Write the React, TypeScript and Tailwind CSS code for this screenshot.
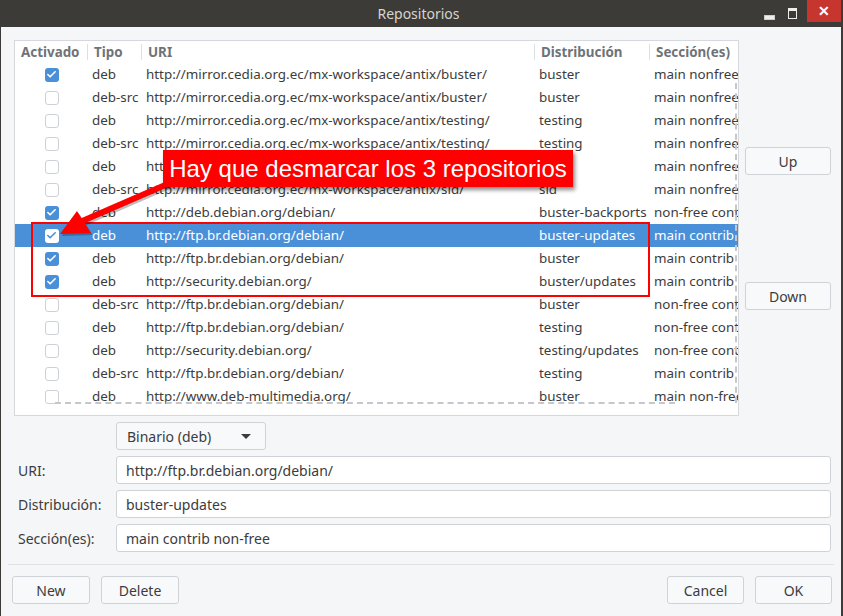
import { Check } from 'lucide-react';

type Repo = {
  on: boolean;
  tipo: string;
  uri: string;
  dist: string;
  sec: string;
  selected?: boolean;
};

const repos: Repo[] = [
  { on: true, tipo: 'deb', uri: 'http://mirror.cedia.org.ec/mx-workspace/antix/buster/', dist: 'buster', sec: 'main nonfree' },
  { on: false, tipo: 'deb-src', uri: 'http://mirror.cedia.org.ec/mx-workspace/antix/buster/', dist: 'buster', sec: 'main nonfree' },
  { on: false, tipo: 'deb', uri: 'http://mirror.cedia.org.ec/mx-workspace/antix/testing/', dist: 'testing', sec: 'main nonfree' },
  { on: false, tipo: 'deb-src', uri: 'http://mirror.cedia.org.ec/mx-workspace/antix/testing/', dist: 'testing', sec: 'main nonfree' },
  { on: false, tipo: 'deb', uri: 'http://mirror.cedia.org.ec/mx-workspace/antix/sid/', dist: 'sid', sec: 'main nonfree' },
  { on: false, tipo: 'deb-src', uri: 'http://mirror.cedia.org.ec/mx-workspace/antix/sid/', dist: 'sid', sec: 'main nonfree' },
  { on: true, tipo: 'deb', uri: 'http://deb.debian.org/debian/', dist: 'buster-backports', sec: 'non-free contrib' },
  { on: true, tipo: 'deb', uri: 'http://ftp.br.debian.org/debian/', dist: 'buster-updates', sec: 'main contrib non-free', selected: true },
  { on: true, tipo: 'deb', uri: 'http://ftp.br.debian.org/debian/', dist: 'buster', sec: 'main contrib non-free' },
  { on: true, tipo: 'deb', uri: 'http://security.debian.org/', dist: 'buster/updates', sec: 'main contrib non-free' },
  { on: false, tipo: 'deb-src', uri: 'http://ftp.br.debian.org/debian/', dist: 'buster', sec: 'non-free contrib' },
  { on: false, tipo: 'deb', uri: 'http://ftp.br.debian.org/debian/', dist: 'testing', sec: 'non-free contrib' },
  { on: false, tipo: 'deb', uri: 'http://security.debian.org/', dist: 'testing/updates', sec: 'non-free contrib' },
  { on: false, tipo: 'deb-src', uri: 'http://ftp.br.debian.org/debian/', dist: 'testing', sec: 'main contrib non-free' },
  { on: false, tipo: 'deb', uri: 'http://www.deb-multimedia.org/', dist: 'buster', sec: 'main non-free' },
];

const cols = 'grid grid-cols-[72px_54px_393px_115px_140px]';

function CheckBox({ on, selected }: { on: boolean; selected?: boolean }) {
  if (!on) {
    return <span className="block h-[14px] w-[14px] rounded-[3px] border border-[#cdd1d6] bg-white" />;
  }
  return (
    <span
      className={`flex h-[14px] w-[14px] items-center justify-center rounded-[3px] ${
        selected ? 'bg-white text-[#4a90d9]' : 'bg-[#4a90d9] text-white'
      }`}
    >
      <Check size={11} strokeWidth={3.5} />
    </span>
  );
}

function HeaderCell({ label, sep }: { label: string; sep?: boolean }) {
  return (
    <div className="flex h-full items-center">
      {sep && <span className="mr-[6px] h-[16px] w-px bg-[#dcdfe3]" />}
      <span className={sep ? '' : 'pl-[6px]'}>{label}</span>
    </div>
  );
}

function Button({ label, className = '' }: { label: string; className?: string }) {
  return (
    <div
      className={`flex h-[28px] items-center justify-center rounded-[3px] border border-[#cfd3d8] bg-[#f8f9fa] text-[14px] text-[#3c3c3c] ${className}`}
    >
      {label}
    </div>
  );
}

function Field({ label, value }: { label: string; value: string }) {
  return (
    <div className="flex h-[28px] items-center">
      <span className="w-[102px] pl-[4px] text-[14px] text-[#3c3c3c]">{label}</span>
      <div className="flex h-full flex-1 items-center rounded-[3px] border border-[#cfd3d8] bg-white px-[9px] text-[14px] text-[#3c3c3c]">
        {value}
      </div>
    </div>
  );
}

export default function App() {
  return (
    <div
      className="relative h-[616px] w-[843px] overflow-hidden bg-[#3c3b37]"
      style={{ fontFamily: '"Noto Sans", "Open Sans", sans-serif' }}
    >
      {/* title bar */}
      <div className="relative flex h-[27px] items-center justify-center text-[14px] text-[#d7d5cf]">
        <span className="-ml-[6px]">Repositorios</span>
        <div className="absolute right-[2px] top-0 flex h-[22px] items-start">
          <span className="mr-[13px] mt-[15px] h-[5px] w-[11px] border border-[#cfcdc8] bg-[#eeeeec]" />
          <span className="mr-[10px] mt-[8px] h-[11px] w-[9px] border-[1.5px] border-t-[3px] border-[#eeeeec]" />
          <span className="flex h-[22px] w-[34px] items-center justify-center bg-[#c7352f] text-[14px] font-bold leading-none text-white">
            ✕
          </span>
        </div>
      </div>

      {/* body */}
      <div className="ml-[1px] mr-[2px] flex h-[589px] flex-col bg-[#f5f6f7]">
        <div className="flex pt-[13px]">
          {/* table */}
          <div className="ml-[13px] h-[376px] w-[725px] overflow-hidden border border-[#d5d8dc] bg-white text-[13.4px] text-[#3c3c3c]">
            <div className={`${cols} h-[22px] font-bold text-[#6f7377]`}>
              <HeaderCell label="Activado" />
              <HeaderCell label="Tipo" sep />
              <HeaderCell label="URI" sep />
              <HeaderCell label="Distribución" sep />
              <HeaderCell label="Sección(es)" sep />
            </div>
            <div className="relative">
              {repos.map((r, i) => (
                <div
                  key={i}
                  className={`${cols} h-[23px] items-center whitespace-nowrap ${
                    r.selected ? 'bg-[#4a90d9] text-white' : ''
                  }`}
                >
                  <div className="flex justify-center pl-[1px]">
                    <CheckBox on={r.on} selected={r.selected} />
                  </div>
                  <div className="pl-[5px]">{r.tipo}</div>
                  <div className="pl-[5px]">{r.uri}</div>
                  <div className="pl-[5px]">{r.dist}</div>
                  <div className="overflow-hidden pl-[5px]">{r.sec}</div>
                </div>
              ))}
              <div className="absolute right-[1px] top-[20px] h-[320px] border-l-2 border-dashed border-[#c4c7cb]" />
              <div className="absolute bottom-[4px] left-[40px] w-[620px] border-t-2 border-dashed border-[#c4c7cb]" />
            </div>
          </div>

          {/* side buttons */}
          <div className="ml-[6px] flex w-[86px] flex-col pt-[107px]">
            <Button label="Up" />
            <Button label="Down" className="mt-[107px]" />
          </div>
        </div>

        {/* form */}
        <div className="mr-[10px] mt-[6px] flex flex-col gap-[6px] pl-[13px]">
          <div className="flex h-[28px]">
            <div className="ml-[102px] flex w-[150px] items-center justify-between rounded-[3px] border border-[#cfd3d8] bg-[#f8f9fa] pl-[10px] pr-[14px] text-[14px] text-[#3c3c3c]">
              Binario (deb)
              <span className="h-0 w-0 border-x-[5px] border-t-[5px] border-x-transparent border-t-[#3c3c3c]" />
            </div>
          </div>
          <Field label="URI:" value="http://ftp.br.debian.org/debian/" />
          <Field label="Distribución:" value="buster-updates" />
          <Field label="Sección(es):" value="main contrib non-free" />
        </div>

        <div className="ml-[7px] mr-[7px] mt-[12px] border-t border-[#dfe1e4]" />

        <div className="flex justify-between pl-[11px] pr-[9px] pt-[11px]">
          <div className="flex gap-[11px]">
            <Button label="New" className="w-[78px]" />
            <Button label="Delete" className="w-[78px]" />
          </div>
          <div className="flex gap-[11px]">
            <Button label="Cancel" className="w-[77px]" />
            <Button label="OK" className="w-[77px]" />
          </div>
        </div>
      </div>

      {/* annotation overlay */}
      <div className="absolute left-[31px] top-[222px] h-[75px] w-[619px] border-2 border-[#ff0000]" />
      <svg className="absolute left-0 top-0" width="843" height="616">
        <g transform="translate(1.5,2)" fill="#000" opacity="0.25">
          <line x1="186" y1="176" x2="80" y2="222" stroke="#000" strokeWidth="6" />
          <polygon points="60,234 77,211 91,233" />
        </g>
        <line x1="186" y1="176" x2="80" y2="222" stroke="#ff0000" strokeWidth="6" />
        <polygon points="60,234 77,211 91,233" fill="#ff0000" />
      </svg>
      <div
        className="absolute left-[163px] top-[150px] flex h-[37px] w-[410px] items-center justify-center whitespace-nowrap bg-[#ff0000] text-[24px] text-white shadow-[2px_3px_4px_rgba(0,0,0,0.45)]"
        style={{ fontFamily: '"Liberation Sans", Arial, sans-serif' }}
      >
        Hay que desmarcar los 3 repositorios
      </div>
    </div>
  );
}
